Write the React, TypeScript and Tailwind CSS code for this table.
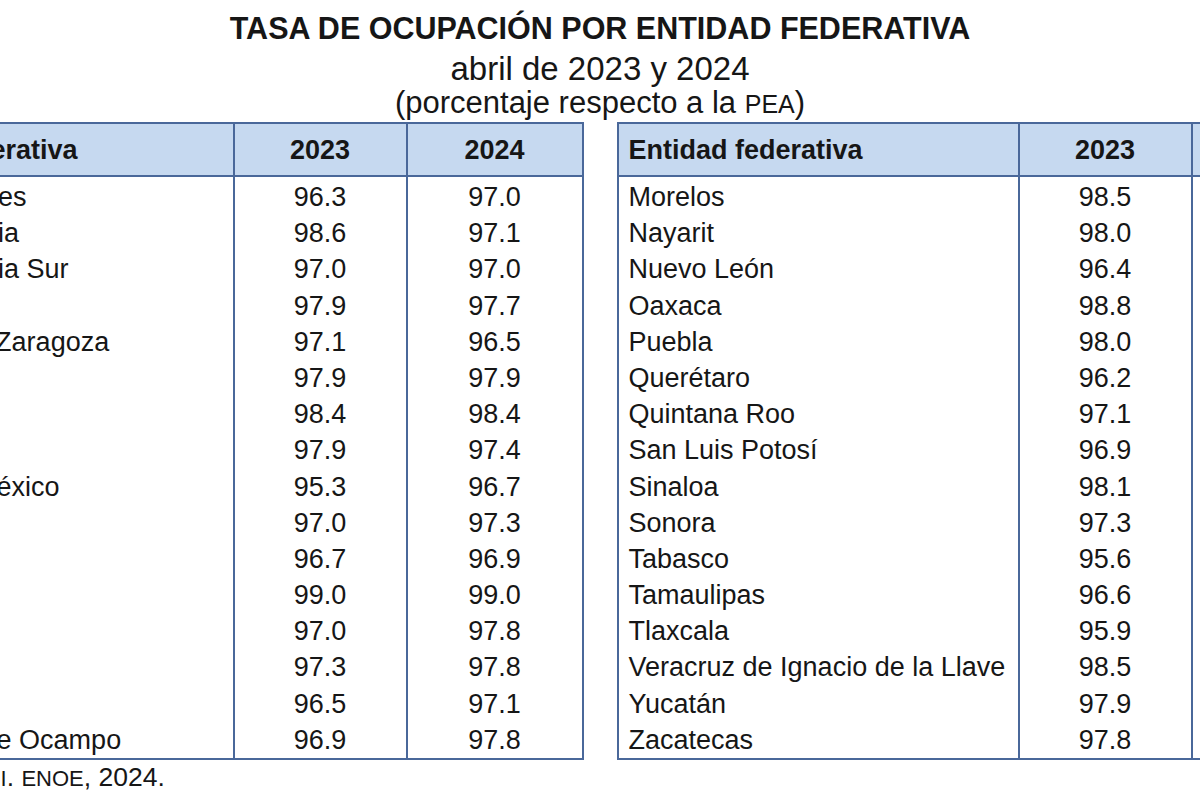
import React from "react";

type Row = [string, string, string];

const left: Row[] = [
  ["Aguascalientes", "96.3", "97.0"],
  ["Baja California", "98.6", "97.1"],
  ["Baja California Sur", "97.0", "97.0"],
  ["Campeche", "97.9", "97.7"],
  ["Coahuila de Zaragoza", "97.1", "96.5"],
  ["Colima", "97.9", "97.9"],
  ["Chiapas", "98.4", "98.4"],
  ["Chihuahua", "97.9", "97.4"],
  ["Ciudad de México", "95.3", "96.7"],
  ["Durango", "97.0", "97.3"],
  ["Guanajuato", "96.7", "96.9"],
  ["Guerrero", "99.0", "99.0"],
  ["Hidalgo", "97.0", "97.8"],
  ["Jalisco", "97.3", "97.8"],
  ["México", "96.5", "97.1"],
  ["Michoacán de Ocampo", "96.9", "97.8"],
];

const right: Row[] = [
  ["Morelos", "98.5", "98.2"],
  ["Nayarit", "98.0", "97.8"],
  ["Nuevo León", "96.4", "96.9"],
  ["Oaxaca", "98.8", "98.9"],
  ["Puebla", "98.0", "97.8"],
  ["Querétaro", "96.2", "96.6"],
  ["Quintana Roo", "97.1", "97.9"],
  ["San Luis Potosí", "96.9", "97.4"],
  ["Sinaloa", "98.1", "97.8"],
  ["Sonora", "97.3", "97.0"],
  ["Tabasco", "95.6", "96.2"],
  ["Tamaulipas", "96.6", "97.2"],
  ["Tlaxcala", "95.9", "96.8"],
  ["Veracruz de Ignacio de la Llave", "98.5", "98.6"],
  ["Yucatán", "97.9", "98.2"],
  ["Zacatecas", "97.8", "98.0"],
];

function Table({ rows }: { rows: Row[] }) {
  return (
    <div className="w-[752px] shrink-0 border-2 border-[#4a689a]">
      <div className="flex h-[53px] bg-[#c6d9f0] border-b-2 border-[#4a689a] text-[27px] font-bold leading-[51px]">
        <div className="w-[401px] border-r-2 border-[#4a689a] pl-[10px] pt-[1px]">Entidad federativa</div>
        <div className="w-[173px] border-r-2 border-[#4a689a] text-center pt-[1px]">2023</div>
        <div className="w-[174px] text-center pt-[1px]">2024</div>
      </div>
      <div className="flex text-[27px] leading-[36.2px]">
        <div className="w-[401px] border-r-2 border-[#4a689a] pl-[10px] pt-[2px]">
          {rows.map((r) => (
            <div key={r[0]} className="h-[36.2px] whitespace-nowrap">{r[0]}</div>
          ))}
        </div>
        <div className="w-[173px] border-r-2 border-[#4a689a] text-center pt-[2px]">
          {rows.map((r, i) => (
            <div key={i} className="h-[36.2px]">{r[1]}</div>
          ))}
        </div>
        <div className="w-[174px] text-center pt-[2px]">
          {rows.map((r, i) => (
            <div key={i} className="h-[36.2px]">{r[2]}</div>
          ))}
        </div>
      </div>
    </div>
  );
}

export default function App() {
  return (
    <div className="w-[1200px] h-[800px] overflow-hidden bg-white flex justify-center text-[#161616] font-['Liberation_Sans',Arial,sans-serif]">
      <div className="w-[1537px] shrink-0 flex flex-col">
        <div className="pt-[11px] text-center">
          <div className="text-[30.5px] leading-[34px] font-bold">TASA DE OCUPACIÓN POR ENTIDAD FEDERATIVA</div>
          <div className="mt-[7px] text-[33px] leading-[34px]">abril de 2023 y 2024</div>
          <div className="text-[31px] leading-[34px]">
            (porcentaje respecto a la <span className="text-[25px]">PEA</span>)
          </div>
        </div>
        <div className="mt-[1px] flex gap-[33px]">
          <Table rows={left} />
          <Table rows={right} />
        </div>
        <div className="pl-[18px] text-[26.5px] leading-[34px] whitespace-nowrap">
          Fuente: <span className="text-[22px]">INEGI</span>. <span className="text-[22px]">ENOE</span>, 2024.
        </div>
      </div>
    </div>
  );
}
